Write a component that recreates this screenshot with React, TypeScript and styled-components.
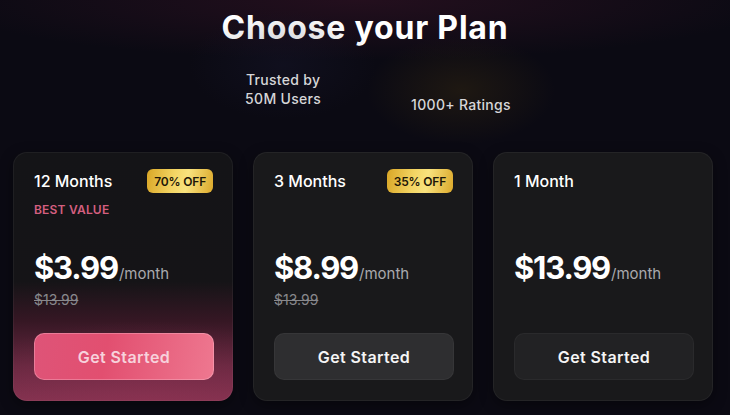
import React from "react";
import styled, { createGlobalStyle, css } from "styled-components";

const Global = createGlobalStyle`
  html, body { margin: 0; padding: 0; }
  body {
    background: #0b0a13;
    font-family: "Inter", "Open Sans", sans-serif;
    color: #fff;
  }
`;

const Page = styled.div`
  position: relative;
  width: 730px;
  height: 415px;
  overflow: hidden;
  background:
    radial-gradient(ellipse 420px 60px at 360px 0px, rgba(60, 20, 40, 0.5), transparent 100%),
    #0b0a13;
  display: flex;
  flex-direction: column;
`;

const Title = styled.h1`
  margin: 9px 0 0;
  text-align: center;
  font-size: 32px;
  font-weight: 700;
  letter-spacing: 0.8px;
  line-height: 38px;
  color: #fff;
`;

const StatsRow = styled.div`
  display: flex;
  justify-content: center;
  gap: 90px;
  margin-top: 23px;
  height: 82px;
  padding-left: 26px;
`;

const Stat = styled.div<{ $glow: string; $offset: number }>`
  position: relative;
  padding-top: ${(p) => p.$offset}px;
  text-align: center;
  font-size: 14px;
  font-weight: 500;
  letter-spacing: 0.3px;
  line-height: 19px;
  color: #d6d6d8;
  &::before {
    content: "";
    position: absolute;
    left: 50%;
    top: ${(p) => p.$offset - 60}px;
    width: 190px;
    height: 110px;
    transform: translateX(-50%);
    background: radial-gradient(ellipse at center, ${(p) => p.$glow}, transparent 70%);
    pointer-events: none;
  }
  span { position: relative; }
`;

const Cards = styled.div`
  display: grid;
  grid-template-columns: repeat(3, 220px);
  gap: 20px;
  padding-left: 13px;
`;

const Card = styled.div<{ $featured?: boolean }>`
  height: 249px;
  box-sizing: border-box;
  border-radius: 14px;
  padding: 16px 19px 20px 20px;
  display: flex;
  flex-direction: column;
  border: 1px solid rgba(255, 255, 255, 0.05);
  background: #19191b;
  box-shadow: 0 4px 14px rgba(0, 0, 0, 0.4);
  ${(p) =>
    p.$featured &&
    css`
      background:
        radial-gradient(ellipse 200px 80px at 60% 100%, rgba(150, 50, 85, 0.35), transparent 100%),
        linear-gradient(to bottom, #141417 0%, #151417 52%, #361724 68%, #672840 86%, #82324f 100%);
      background-repeat: no-repeat;
      background-origin: border-box;
      border-color: rgba(255, 255, 255, 0.05);
    `}
`;

const Header = styled.div`
  display: flex;
  justify-content: space-between;
  align-items: center;
  height: 24px;
`;

const PlanName = styled.div`
  font-size: 16px;
  font-weight: 500;
  color: #fff;
`;

const Badge = styled.div`
  height: 24px;
  padding: 0 7px;
  border-radius: 6px;
  display: flex;
  align-items: center;
  font-size: 12px;
  font-weight: 600;
  letter-spacing: -0.2px;
  color: #1d1608;
  background: linear-gradient(100deg, #d9a626 0%, #f3d564 40%, #f8e27e 60%, #dca92b 100%);
`;

const Tag = styled.div`
  margin-top: 9px;
  height: 14px;
  font-size: 12px;
  font-weight: 600;
  letter-spacing: 0.2px;
  color: #d45f7f;
`;

const PriceRow = styled.div`
  margin-top: 35px;
  display: flex;
  align-items: baseline;
  line-height: 34px;
`;

const Price = styled.span`
  font-size: 31px;
  font-weight: 700;
  letter-spacing: -1.2px;
  color: #fff;
`;

const Per = styled.span`
  font-size: 15px;
  font-weight: 400;
  color: #a9a9ad;
  margin-left: 1px;
`;

const OldPrice = styled.div`
  height: 20px;
  font-size: 14px;
  font-weight: 400;
  color: #88888c;
  text-decoration: line-through;
`;

const Button = styled.button<{ $variant: "pink" | "gray" | "dark" }>`
  margin-top: auto;
  height: 47px;
  width: 180px;
  border-radius: 10px;
  border: 1px solid rgba(255, 255, 255, 0.04);
  font-family: inherit;
  font-size: 16px;
  font-weight: 600;
  letter-spacing: 0.4px;
  color: #f5f5f5;
  cursor: pointer;
  background: ${(p) => (p.$variant === "gray" ? "#2e2e30" : "#222224")};
  ${(p) =>
    p.$variant === "pink" &&
    css`
      background: linear-gradient(100deg, #de5478 0%, #e24f70 40%, #ee7890 100%);
      background-origin: border-box;
      border-color: rgba(255, 200, 215, 0.35);
      color: #f7d2dc;
    `}
`;

type Plan = {
  name: string;
  badge?: string;
  tag?: string;
  price: string;
  old?: string;
  variant: "pink" | "gray" | "dark";
};

const plans: Plan[] = [
  { name: "12 Months", badge: "70% OFF", tag: "BEST VALUE", price: "$3.99", old: "$13.99", variant: "pink" },
  { name: "3 Months", badge: "35% OFF", price: "$8.99", old: "$13.99", variant: "gray" },
  { name: "1 Month", price: "$13.99", variant: "dark" },
];

export default function App() {
  return (
    <>
      <Global />
      <Page>
        <Title>Choose your Plan</Title>
        <StatsRow>
          <Stat $glow="rgba(28, 28, 55, 0.3)" $offset={0}>
            <span>Trusted by<br />50M Users</span>
          </Stat>
          <Stat $glow="rgba(80, 60, 15, 0.28)" $offset={25}>
            <span>1000+ Ratings</span>
          </Stat>
        </StatsRow>
        <Cards>
          {plans.map((p) => (
            <Card key={p.name} $featured={p.variant === "pink"}>
              <Header>
                <PlanName>{p.name}</PlanName>
                {p.badge && <Badge>{p.badge}</Badge>}
              </Header>
              <Tag>{p.tag}</Tag>
              <PriceRow>
                <Price>{p.price}</Price>
                <Per>/month</Per>
              </PriceRow>
              <OldPrice>{p.old}</OldPrice>
              <Button $variant={p.variant}>Get Started</Button>
            </Card>
          ))}
        </Cards>
      </Page>
    </>
  );
}
